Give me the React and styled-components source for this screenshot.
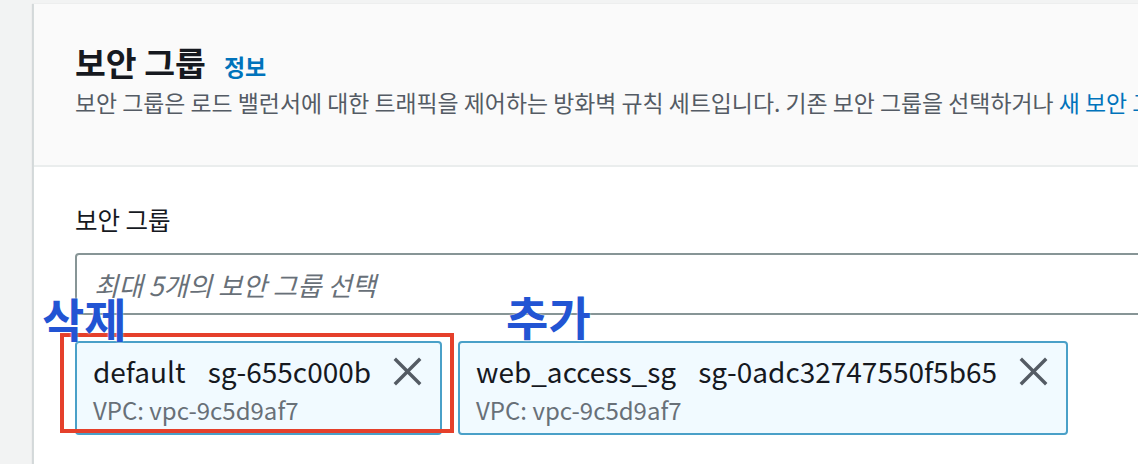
import React from "react";
import styled, { createGlobalStyle } from "styled-components";

const Global = createGlobalStyle`
  html, body { margin: 0; padding: 0; }
  body {
    background: #f2f3f3;
    font-family: "Noto Sans CJK KR", "Noto Sans", sans-serif;
    overflow: hidden;
  }
`;

const Page = styled.div`
  width: 1138px;
  height: 464px;
  overflow: hidden;
  padding: 4px 0 0 33px;
  box-sizing: border-box;
`;

const Panel = styled.section`
  width: 1300px;
  min-height: 470px;
  background: #ffffff;
  border-left: 1px solid #d5dbdb;
  box-shadow: -1px 0 1px rgba(0, 22, 40, 0.12);
`;

const Header = styled.header`
  background: #fafafa;
  border-bottom: 2px solid #eaeded;
  padding: 38px 0 0 41px;
  height: 163px;
  box-sizing: border-box;
`;

const TitleRow = styled.div`
  display: flex;
  align-items: baseline;
  gap: 18px;
`;

const Title = styled.h2`
  margin: 0;
  font-size: 33.5px;
  line-height: 40px;
  font-weight: 700;
  color: #16191f;
`;

const InfoLink = styled.a`
  font-size: 23px;
  font-weight: 700;
  color: #0073bb;
  text-decoration: none;
`;

const Description = styled.p`
  margin: 4px 0 0;
  font-size: 22.9px;
  line-height: 30px;
  color: #545b64;
  white-space: nowrap;
`;

const Link = styled.a`
  color: #0073bb;
  text-decoration: none;
`;

const Body = styled.div`
  padding: 38px 0 0 41px;
`;

const Label = styled.label`
  display: block;
  font-size: 24.5px;
  line-height: 30px;
  color: #16191f;
`;

const Input = styled.div`
  margin-top: 18px;
  height: 62px;
  box-sizing: border-box;
  border: 2px solid #879596;
  border-radius: 4px;
  display: flex;
  align-items: center;
  padding-left: 17px;
  font-size: 26.5px;
  font-style: italic;
  color: #687078;
`;

const TokenRow = styled.div`
  margin-top: 26px;
  display: flex;
  gap: 16px;
  align-items: flex-start;
`;

const TokenWrap = styled.div`
  position: relative;
`;

const Token = styled.div`
  display: flex;
  align-items: flex-start;
  gap: 22px;
  height: 94px;
  box-sizing: border-box;
  border: 2px solid #4aa0c8;
  border-radius: 4px;
  background: #f1faff;
  padding: 10px 18px 0 16px;
`;

const TokenText = styled.div`
  display: flex;
  flex-direction: column;
`;

const TokenMain = styled.div`
  display: flex;
  gap: 22px;
  font-size: 28px;
  line-height: 36px;
  color: #16191f;
  white-space: nowrap;
`;

const TokenSub = styled.div`
  margin-top: 6px;
  font-size: 24px;
  line-height: 30px;
  color: #687078;
`;

const Dismiss = styled.button`
  border: 0;
  background: none;
  padding: 0;
  margin-top: 4px;
  width: 29px;
  height: 29px;
  color: #545b64;
  display: flex;
  cursor: pointer;
`;

const Highlight = styled.div`
  position: absolute;
  left: -15px;
  top: -8px;
  right: -12px;
  bottom: 2px;
  border: 4px solid #e5402b;
  pointer-events: none;
`;

const Note = styled.span`
  position: absolute;
  left: ${(p) => p.$left}px;
  top: ${(p) => p.$top}px;
  font-size: 46px;
  line-height: 50px;
  font-weight: 700;
  color: #2254d3;
  white-space: nowrap;
  text-shadow: 0 0 2px #ffffff;
  pointer-events: none;
`;

const XIcon = () => (
  <svg width="29" height="29" viewBox="0 0 29 29" fill="none">
    <path d="M3 3 L26 26 M26 3 L3 26" stroke="currentColor" strokeWidth="3.4" strokeLinecap="square" />
  </svg>
);

const tokens = [
  { name: "default", id: "sg-655c000b", vpc: "vpc-9c5d9af7", note: "삭제", highlight: true, noteLeft: -33, noteTop: -49 },
  { name: "web_access_sg", id: "sg-0adc32747550f5b65", vpc: "vpc-9c5d9af7", note: "추가", highlight: false, noteLeft: 48, noteTop: -51 },
];

export default function App() {
  return (
    <>
      <Global />
      <Page>
        <Panel>
          <Header>
            <TitleRow>
              <Title>보안 그룹</Title>
              <InfoLink href="#">정보</InfoLink>
            </TitleRow>
            <Description>
              보안 그룹은 로드 밸런서에 대한 트래픽을 제어하는 방화벽 규칙 세트입니다. 기존 보안 그룹을 선택하거나{" "}
              <Link href="#">새 보안 그룹을 생성</Link>할 수 있습니다.
            </Description>
          </Header>
          <Body>
            <Label>보안 그룹</Label>
            <Input>최대 5개의 보안 그룹 선택</Input>
            <TokenRow>
              {tokens.map((t) => (
                <TokenWrap key={t.id}>
                  <Token>
                    <TokenText>
                      <TokenMain>
                        <span>{t.name}</span>
                        <span>{t.id}</span>
                      </TokenMain>
                      <TokenSub>VPC: {t.vpc}</TokenSub>
                    </TokenText>
                    <Dismiss aria-label="제거">
                      <XIcon />
                    </Dismiss>
                  </Token>
                  {t.highlight && <Highlight />}
                  <Note $left={t.noteLeft} $top={t.noteTop}>{t.note}</Note>
                </TokenWrap>
              ))}
            </TokenRow>
          </Body>
        </Panel>
      </Page>
    </>
  );
}
